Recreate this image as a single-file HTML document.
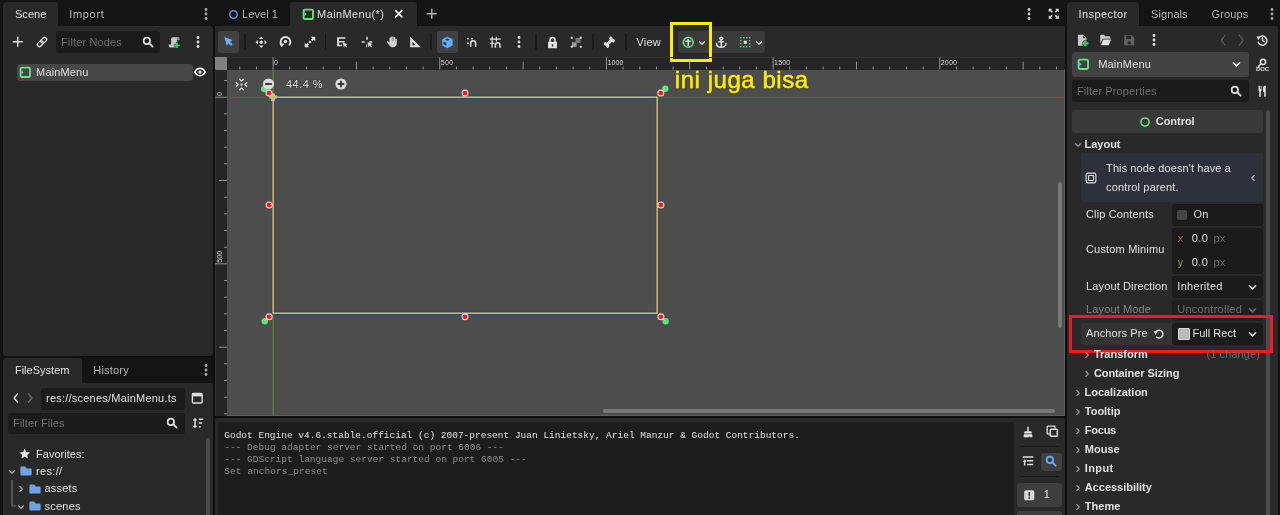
<!DOCTYPE html>
<html lang="en"><head><meta charset="utf-8"><title>Godot - MainMenu</title>
<style>
html,body{margin:0;padding:0}
body{width:1280px;height:515px;overflow:hidden;background:#141414;position:relative;font-family:"Liberation Sans",sans-serif;color:#e0e0e0}
.r{position:absolute}
.t{position:absolute;white-space:pre;line-height:1;font-family:"Liberation Sans",sans-serif}
#all{position:absolute;left:0;top:0;width:1280px;height:515px;will-change:transform;transform:translateZ(0)}
.m{font-family:"Liberation Mono",monospace}
svg{position:absolute;overflow:visible}
</style></head><body><div id="all">
<div class="r" style="left:3px;top:2px;width:55px;height:25px;background:#292929;border-radius:4px 4px 0 0"></div>
<div class="r" style="left:3px;top:26px;width:210px;height:330px;background:#292929;border-radius:0 3px 3px 3px"></div>
<div class="r" style="left:3px;top:358px;width:79px;height:25px;background:#292929;border-radius:4px 4px 0 0"></div>
<div class="r" style="left:3px;top:383px;width:210px;height:140px;background:#292929;border-radius:0 3px 0 0"></div>
<div class="r" style="left:290px;top:2px;width:127px;height:25px;background:#292929;border-radius:4px 4px 0 0"></div>
<div class="r" style="left:215px;top:26px;width:850px;height:31px;background:#292929;"></div>
<div class="r" style="left:215px;top:57px;width:850px;height:359px;background:#252525;"></div>
<div class="r" style="left:227px;top:69.5px;width:838px;height:346px;background:#4d4d4d;"></div>
<div class="r" style="left:215px;top:57px;width:12px;height:12.5px;background:#808080;"></div>
<div class="r" style="left:215px;top:418px;width:850px;height:100px;background:#292929;border-radius:3px 3px 0 0"></div>
<div class="r" style="left:218px;top:422px;width:796px;height:100px;background:#1d1d1d;border-radius:3px 3px 0 0"></div>
<div class="r" style="left:1067px;top:2px;width:72px;height:25px;background:#292929;border-radius:4px 4px 0 0"></div>
<div class="r" style="left:1067px;top:26px;width:210.5px;height:500px;background:#292929;border-radius:0 3px 0 0"></div>
<div class="r" style="left:56px;top:31px;width:104px;height:22px;background:#1b1b1b;border-radius:3px"></div>
<div class="r" style="left:16.5px;top:63.5px;width:176px;height:17.5px;background:#474747;border-radius:3px"></div>
<div class="r" style="left:40.5px;top:388px;width:144px;height:21.5px;background:#1b1b1b;border-radius:3px"></div>
<div class="r" style="left:7.5px;top:412.75px;width:177px;height:21.5px;background:#1b1b1b;border-radius:3px"></div>
<div class="r" style="left:206px;top:438px;width:4px;height:90px;background:#4a4a4a;border-radius:2px"></div>
<div class="r" style="left:218px;top:31px;width:21px;height:22px;background:#414141;border-radius:3px"></div>
<div class="r" style="left:437px;top:31px;width:21px;height:22px;background:#414141;border-radius:3px"></div>
<div class="r" style="left:677.5px;top:31px;width:87px;height:22px;background:#3b3b3b;border-radius:3px"></div>
<div class="r" style="left:244px;top:34px;width:1.5px;height:15.7px;background:#1b1b1b;"></div>
<div class="r" style="left:324.8px;top:34px;width:1.5px;height:15.7px;background:#1b1b1b;"></div>
<div class="r" style="left:430px;top:34px;width:1.5px;height:15.7px;background:#1b1b1b;"></div>
<div class="r" style="left:535.1px;top:34px;width:1.5px;height:15.7px;background:#1b1b1b;"></div>
<div class="r" style="left:592px;top:34px;width:1.5px;height:15.7px;background:#1b1b1b;"></div>
<div class="r" style="left:625.2px;top:34px;width:1.5px;height:15.7px;background:#1b1b1b;"></div>
<div class="r" style="left:1071.5px;top:52px;width:177px;height:25px;background:#424242;border-radius:3px"></div>
<div class="r" style="left:1071.5px;top:80px;width:177px;height:21.7px;background:#1b1b1b;border-radius:3px"></div>
<div class="r" style="left:1071.5px;top:110px;width:191px;height:23px;background:#393939;border-radius:3px"></div>
<div class="r" style="left:1265.6px;top:110px;width:4.3px;height:420px;background:#4a4a4a;border-radius:2px"></div>
<div class="r" style="left:1080.5px;top:153.3px;width:182px;height:49px;background:#2c313b;border-radius:3px"></div>
<div class="r" style="left:1171.7px;top:204px;width:91px;height:21.7px;background:#1b1b1b;border-radius:3px"></div>
<div class="r" style="left:1171.7px;top:227.6px;width:91px;height:46.7px;background:#1b1b1b;border-radius:3px"></div>
<div class="r" style="left:1171.7px;top:276.4px;width:91px;height:21.4px;background:#1b1b1b;border-radius:3px"></div>
<div class="r" style="left:1171.7px;top:299.6px;width:91px;height:21.4px;background:#1f1f1f;border-radius:3px"></div>
<div class="r" style="left:1080.5px;top:323px;width:182px;height:21.5px;background:#333333;border-radius:3px"></div>
<div class="r" style="left:1171.7px;top:323px;width:91px;height:21.5px;background:#1b1b1b;border-radius:3px"></div>
<div class="r" style="left:1177px;top:209.8px;width:10.2px;height:10.2px;background:#444444;border-radius:2px"></div>
<div class="r" style="left:1177.5px;top:328px;width:12px;height:11.6px;background:#b9b9b9;border:1px solid #d6d6d6;box-sizing:border-box;border-radius:1px"></div>
<div class="r" style="left:1020px;top:445.8px;width:39px;height:1.5px;background:#1b1b1b;"></div>
<div class="r" style="left:1020px;top:475.6px;width:39px;height:1.5px;background:#1b1b1b;"></div>
<div class="r" style="left:11.2px;top:480px;width:1.6px;height:26.8px;background:#525252;"></div>
<div class="r" style="left:11.2px;top:505.3px;width:5.2px;height:1.6px;background:#525252;"></div>
<div class="r" style="left:1041.25px;top:452.5px;width:20.5px;height:18px;background:#404040;border-radius:3px"></div>
<div class="r" style="left:1017px;top:482.5px;width:44.75px;height:24.5px;background:#3e3e3e;border-radius:3px"></div>
<div class="r" style="left:1017px;top:510.5px;width:44.75px;height:24.5px;background:#3e3e3e;border-radius:3px"></div>
<div class="r" style="left:603px;top:409px;width:452px;height:4px;background:#787878;border-radius:2px"></div>
<div class="r" style="left:1058px;top:181.5px;width:4px;height:146.5px;background:#787878;border-radius:2px"></div>
<div class="r" style="left:213px;top:26px;width:2px;height:500px;background:#0f0f0f;"></div>
<div class="r" style="left:1065px;top:26px;width:2px;height:500px;background:#0f0f0f;"></div>
<div class="r" style="left:215px;top:416px;width:850px;height:2px;background:#0f0f0f;"></div>
<div class="r" style="left:3px;top:356px;width:210px;height:2px;background:#101010;"></div>
<div class="r" style="left:670px;top:22px;width:42px;height:40px;background:transparent;border:3px solid #ffee00;box-sizing:border-box"></div>
<div class="r" style="left:1068.5px;top:315.3px;width:204.6px;height:37.5px;background:transparent;border:3.4px solid #ee1c1c;box-sizing:border-box"></div>
<svg style="left:0;top:0" width="1280" height="515" viewBox="0 0 1280 515">
<rect x="227" y="57" width="838" height="1" fill="#2f2f2f"/><rect x="215" y="69.500" width="1" height="346.500" fill="#333333"/>
<rect x="239.32" y="66.60" width="0.9" height="2.90" fill="#a0a0a0"/>
<rect x="255.98" y="66.60" width="0.9" height="2.90" fill="#a0a0a0"/>
<rect x="272.65" y="57.30" width="0.9" height="12.20" fill="#a0a0a0"/>
<rect x="289.32" y="66.60" width="0.9" height="2.90" fill="#a0a0a0"/>
<rect x="305.98" y="66.60" width="0.9" height="2.90" fill="#a0a0a0"/>
<rect x="322.65" y="66.60" width="0.9" height="2.90" fill="#a0a0a0"/>
<rect x="339.32" y="66.60" width="0.9" height="2.90" fill="#a0a0a0"/>
<rect x="355.98" y="61.60" width="0.9" height="7.90" fill="#a0a0a0"/>
<rect x="372.65" y="66.60" width="0.9" height="2.90" fill="#a0a0a0"/>
<rect x="389.32" y="66.60" width="0.9" height="2.90" fill="#a0a0a0"/>
<rect x="405.98" y="66.60" width="0.9" height="2.90" fill="#a0a0a0"/>
<rect x="422.65" y="66.60" width="0.9" height="2.90" fill="#a0a0a0"/>
<rect x="439.32" y="57.30" width="0.9" height="12.20" fill="#a0a0a0"/>
<rect x="455.98" y="66.60" width="0.9" height="2.90" fill="#a0a0a0"/>
<rect x="472.65" y="66.60" width="0.9" height="2.90" fill="#a0a0a0"/>
<rect x="489.32" y="66.60" width="0.9" height="2.90" fill="#a0a0a0"/>
<rect x="505.98" y="66.60" width="0.9" height="2.90" fill="#a0a0a0"/>
<rect x="522.65" y="61.60" width="0.9" height="7.90" fill="#a0a0a0"/>
<rect x="539.32" y="66.60" width="0.9" height="2.90" fill="#a0a0a0"/>
<rect x="555.98" y="66.60" width="0.9" height="2.90" fill="#a0a0a0"/>
<rect x="572.65" y="66.60" width="0.9" height="2.90" fill="#a0a0a0"/>
<rect x="589.32" y="66.60" width="0.9" height="2.90" fill="#a0a0a0"/>
<rect x="605.98" y="57.30" width="0.9" height="12.20" fill="#a0a0a0"/>
<rect x="622.65" y="66.60" width="0.9" height="2.90" fill="#a0a0a0"/>
<rect x="639.32" y="66.60" width="0.9" height="2.90" fill="#a0a0a0"/>
<rect x="655.98" y="66.60" width="0.9" height="2.90" fill="#a0a0a0"/>
<rect x="672.65" y="66.60" width="0.9" height="2.90" fill="#a0a0a0"/>
<rect x="689.32" y="61.60" width="0.9" height="7.90" fill="#a0a0a0"/>
<rect x="705.98" y="66.60" width="0.9" height="2.90" fill="#a0a0a0"/>
<rect x="722.65" y="66.60" width="0.9" height="2.90" fill="#a0a0a0"/>
<rect x="739.32" y="66.60" width="0.9" height="2.90" fill="#a0a0a0"/>
<rect x="755.98" y="66.60" width="0.9" height="2.90" fill="#a0a0a0"/>
<rect x="772.65" y="57.30" width="0.9" height="12.20" fill="#a0a0a0"/>
<rect x="789.32" y="66.60" width="0.9" height="2.90" fill="#a0a0a0"/>
<rect x="805.98" y="66.60" width="0.9" height="2.90" fill="#a0a0a0"/>
<rect x="822.65" y="66.60" width="0.9" height="2.90" fill="#a0a0a0"/>
<rect x="839.32" y="66.60" width="0.9" height="2.90" fill="#a0a0a0"/>
<rect x="855.98" y="61.60" width="0.9" height="7.90" fill="#a0a0a0"/>
<rect x="872.65" y="66.60" width="0.9" height="2.90" fill="#a0a0a0"/>
<rect x="889.32" y="66.60" width="0.9" height="2.90" fill="#a0a0a0"/>
<rect x="905.98" y="66.60" width="0.9" height="2.90" fill="#a0a0a0"/>
<rect x="922.65" y="66.60" width="0.9" height="2.90" fill="#a0a0a0"/>
<rect x="939.32" y="57.30" width="0.9" height="12.20" fill="#a0a0a0"/>
<rect x="955.98" y="66.60" width="0.9" height="2.90" fill="#a0a0a0"/>
<rect x="972.65" y="66.60" width="0.9" height="2.90" fill="#a0a0a0"/>
<rect x="989.32" y="66.60" width="0.9" height="2.90" fill="#a0a0a0"/>
<rect x="1005.98" y="66.60" width="0.9" height="2.90" fill="#a0a0a0"/>
<rect x="1022.65" y="61.60" width="0.9" height="7.90" fill="#a0a0a0"/>
<rect x="1039.32" y="66.60" width="0.9" height="2.90" fill="#a0a0a0"/>
<rect x="1055.98" y="66.60" width="0.9" height="2.90" fill="#a0a0a0"/>
<rect x="224.00" y="80.08" width="3.00" height="0.9" fill="#a0a0a0"/>
<rect x="215.20" y="96.75" width="11.80" height="0.9" fill="#a0a0a0"/>
<rect x="224.00" y="113.42" width="3.00" height="0.9" fill="#a0a0a0"/>
<rect x="224.00" y="130.08" width="3.00" height="0.9" fill="#a0a0a0"/>
<rect x="224.00" y="146.75" width="3.00" height="0.9" fill="#a0a0a0"/>
<rect x="224.00" y="163.42" width="3.00" height="0.9" fill="#a0a0a0"/>
<rect x="219.00" y="180.08" width="8.00" height="0.9" fill="#a0a0a0"/>
<rect x="224.00" y="196.75" width="3.00" height="0.9" fill="#a0a0a0"/>
<rect x="224.00" y="213.42" width="3.00" height="0.9" fill="#a0a0a0"/>
<rect x="224.00" y="230.08" width="3.00" height="0.9" fill="#a0a0a0"/>
<rect x="224.00" y="246.75" width="3.00" height="0.9" fill="#a0a0a0"/>
<rect x="215.20" y="263.42" width="11.80" height="0.9" fill="#a0a0a0"/>
<rect x="224.00" y="280.08" width="3.00" height="0.9" fill="#a0a0a0"/>
<rect x="224.00" y="296.75" width="3.00" height="0.9" fill="#a0a0a0"/>
<rect x="224.00" y="313.42" width="3.00" height="0.9" fill="#a0a0a0"/>
<rect x="224.00" y="330.08" width="3.00" height="0.9" fill="#a0a0a0"/>
<rect x="219.00" y="346.75" width="8.00" height="0.9" fill="#a0a0a0"/>
<rect x="224.00" y="363.42" width="3.00" height="0.9" fill="#a0a0a0"/>
<rect x="224.00" y="380.08" width="3.00" height="0.9" fill="#a0a0a0"/>
<rect x="224.00" y="396.75" width="3.00" height="0.9" fill="#a0a0a0"/>
<rect x="224.00" y="413.42" width="3.00" height="0.9" fill="#a0a0a0"/>
<text transform="translate(222.400 96.00) rotate(-90)" font-family="Liberation Sans, sans-serif" font-size="7.2" fill="#d0d0d0">0</text>
<text transform="translate(222.400 262.67) rotate(-90)" font-family="Liberation Sans, sans-serif" font-size="7.2" fill="#d0d0d0">500</text>
<rect x="1064" y="69.500" width="1" height="346.500" fill="#606060"/>
<rect x="227" y="415" width="838" height="1" fill="#606060"/>
<rect x="227" y="96.700" width="837" height="1" fill="#9c3f4e"/>
<rect x="272.600" y="69.500" width="1" height="346" fill="#6d8d2a"/>
<rect x="273.200" y="97.200" width="384" height="216" fill="none" stroke="#36426f" stroke-width="2.800"/>
<rect x="273.200" y="97.200" width="384" height="216" fill="none" stroke="#e9b94d" stroke-width="1.500"/>
<path d="M269.500 97h7.500M273 93.500v7.500" stroke="#e8dcd0" stroke-width="3.200"/><path d="M270 97h7M273 94v7" stroke="#f3a84a" stroke-width="1.500"/>
<circle cx="264.2" cy="89.0" r="3.2" fill="#62e27a"/>
<circle cx="665.3" cy="88.8" r="3.2" fill="#62e27a"/>
<circle cx="264.8" cy="321.2" r="3.2" fill="#62e27a"/>
<circle cx="665.6" cy="321.2" r="3.2" fill="#62e27a"/>
<circle cx="269.0" cy="93.1" r="3.5" fill="#f2e6e6"/><circle cx="269.0" cy="93.1" r="2.400" fill="#ff1414"/>
<circle cx="660.8" cy="93.1" r="3.5" fill="#f2e6e6"/><circle cx="660.8" cy="93.1" r="2.400" fill="#ff1414"/>
<circle cx="269.1" cy="316.8" r="3.5" fill="#f2e6e6"/><circle cx="269.1" cy="316.8" r="2.400" fill="#ff1414"/>
<circle cx="660.9" cy="316.8" r="3.5" fill="#f2e6e6"/><circle cx="660.9" cy="316.8" r="2.400" fill="#ff1414"/>
<circle cx="465.0" cy="93.1" r="3.5" fill="#f2e6e6"/><circle cx="465.0" cy="93.1" r="2.400" fill="#ff1414"/>
<circle cx="465.0" cy="316.8" r="3.5" fill="#f2e6e6"/><circle cx="465.0" cy="316.8" r="2.400" fill="#ff1414"/>
<circle cx="269.1" cy="205.0" r="3.5" fill="#f2e6e6"/><circle cx="269.1" cy="205.0" r="2.400" fill="#ff1414"/>
<circle cx="660.9" cy="205.0" r="3.5" fill="#f2e6e6"/><circle cx="660.9" cy="205.0" r="2.400" fill="#ff1414"/>
<circle cx="268.5" cy="84" r="5.6" fill="#dcdcdc"/><rect x="265.200" y="83" width="6.600" height="2" fill="#3a3a3a"/>
<circle cx="341" cy="84" r="5.6" fill="#dcdcdc"/><path d="M337.700 84h6.600M341 80.700v6.600" stroke="#3a3a3a" stroke-width="2"/>
<g transform="translate(235.5 78.500) scale(0.75)" fill="none" stroke="#e0e0e0" stroke-width="1.600" stroke-linecap="round" stroke-linejoin="round"><path d="M5.500 1 8 3.500 10.500 1M5.500 15 8 12.500 10.500 15M1 5.500 3.500 8 1 10.500M15 5.500 12.500 8 15 10.500"/><rect x="6.700" y="6.700" width="2.600" height="2.600" fill="#e0e0e0" stroke="none"/></g>
</svg>
<span class="t" id="t0" style="left:14.90px;top:9.00px;font-size:11px;color:#e0e0e0;letter-spacing:0.079px;">Scene</span>
<span class="t" id="t1" style="left:69.25px;top:9.00px;font-size:11px;color:#b5b5b5;letter-spacing:0.677px;">Import</span>
<span class="t" id="t2" style="left:61.00px;top:37.00px;font-size:11px;color:#6f6f6f;letter-spacing:0.125px;">Filter Nodes</span>
<span class="t" id="t3" style="left:36.10px;top:67.00px;font-size:11px;color:#e0e0e0;letter-spacing:0.143px;">MainMenu</span>
<span class="t" id="t4" style="left:242.10px;top:9.00px;font-size:11px;color:#b5b5b5;letter-spacing:0.059px;">Level 1</span>
<span class="t" id="t5" style="left:317.10px;top:9.00px;font-size:11px;color:#e0e0e0;letter-spacing:0.380px;">MainMenu(*)</span>
<span class="t" id="t6" style="left:636.50px;top:37.00px;font-size:11px;color:#e0e0e0;letter-spacing:0.148px;">View</span>
<span class="t" id="t7" style="left:286.00px;top:79.00px;font-size:11px;color:#e0e0e0;letter-spacing:0.458px;text-shadow:0 0 1px #222,0 0 1px #222">44.4 %</span>
<span class="t" id="t8" style="left:1078.50px;top:9.00px;font-size:11px;color:#e0e0e0;letter-spacing:0.439px;">Inspector</span>
<span class="t" id="t9" style="left:1151.10px;top:9.00px;font-size:11px;color:#b5b5b5;letter-spacing:0.075px;">Signals</span>
<span class="t" id="t10" style="left:1211.60px;top:9.00px;font-size:11px;color:#b5b5b5;letter-spacing:0.095px;">Groups</span>
<span class="t" id="t11" style="left:1098.20px;top:59.00px;font-size:11px;color:#e0e0e0;letter-spacing:0.193px;">MainMenu</span>
<span class="t" id="t12" style="left:1077.00px;top:86.00px;font-size:11px;color:#6f6f6f;letter-spacing:0.124px;">Filter Properties</span>
<span class="t" id="t13" style="left:1155.75px;top:116.00px;font-size:11px;color:#e0e0e0;font-weight:700;letter-spacing:-0.037px;">Control</span>
<span class="t" id="t14" style="left:1084.50px;top:139.00px;font-size:11px;color:#e0e0e0;font-weight:700;letter-spacing:-0.010px;">Layout</span>
<span class="t" id="t15" style="left:1106.10px;top:163.00px;font-size:11px;color:#e0e0e0;letter-spacing:0.088px;">This node doesn't have a</span>
<span class="t" id="t16" style="left:1106.10px;top:182.00px;font-size:11px;color:#e0e0e0;letter-spacing:0.151px;">control parent.</span>
<span class="t" id="t17" style="left:1086.00px;top:209.00px;font-size:11px;color:#e0e0e0;letter-spacing:0.143px;">Clip Contents</span>
<span class="t" id="t18" style="left:1193.60px;top:209.00px;font-size:11px;color:#e0e0e0;letter-spacing:0.056px;">On</span>
<span class="t" id="t19" style="left:1177.70px;top:233.00px;font-size:11px;color:#a4525c;letter-spacing:0.500px;">x</span>
<span class="t" id="t20" style="left:1191.75px;top:233.00px;font-size:11px;color:#e0e0e0;letter-spacing:0.451px;">0.0</span>
<span class="t" id="t21" style="left:1213.40px;top:233.00px;font-size:11px;color:#6a6a6a;letter-spacing:0.287px;">px</span>
<span class="t" id="t22" style="left:1177.70px;top:257.00px;font-size:11px;color:#8a9a3e;letter-spacing:0.500px;">y</span>
<span class="t" id="t23" style="left:1191.75px;top:257.00px;font-size:11px;color:#e0e0e0;letter-spacing:0.451px;">0.0</span>
<span class="t" id="t24" style="left:1213.40px;top:257.00px;font-size:11px;color:#6a6a6a;letter-spacing:0.287px;">px</span>
<span class="t" id="t25" style="left:1086.00px;top:244.00px;font-size:11px;color:#e0e0e0;letter-spacing:0.169px;">Custom Minimu</span>
<span class="t" id="t26" style="left:1086.00px;top:281.00px;font-size:11px;color:#e0e0e0;letter-spacing:0.131px;">Layout Direction</span>
<span class="t" id="t27" style="left:1177.30px;top:281.00px;font-size:11px;color:#e0e0e0;letter-spacing:0.293px;">Inherited</span>
<span class="t" id="t28" style="left:1086.00px;top:304.00px;font-size:11px;color:#808080;letter-spacing:0.136px;">Layout Mode</span>
<span class="t" id="t29" style="left:1177.30px;top:304.00px;font-size:11px;color:#707070;letter-spacing:0.253px;">Uncontrolled</span>
<span class="t" id="t30" style="left:1086.00px;top:328.00px;font-size:11px;color:#e0e0e0;letter-spacing:0.111px;">Anchors Pre</span>
<span class="t" id="t31" style="left:1192.40px;top:328.00px;font-size:11px;color:#e0e0e0;letter-spacing:0.022px;">Full Rect</span>
<span class="t" id="t32" style="left:1093.90px;top:349.00px;font-size:11px;color:#e0e0e0;font-weight:700;letter-spacing:0.011px;">Transform</span>
<span class="t" id="t33" style="left:1206.50px;top:349.00px;font-size:11px;color:#6c6c6c;letter-spacing:0.091px;">(1 change)</span>
<span class="t" id="t34" style="left:1093.90px;top:368.00px;font-size:11px;color:#e0e0e0;font-weight:700;letter-spacing:-0.086px;">Container Sizing</span>
<span class="t" id="t35" style="left:1084.50px;top:387.00px;font-size:11px;color:#e0e0e0;font-weight:700;letter-spacing:-0.022px;">Localization</span>
<span class="t" id="t36" style="left:1084.80px;top:406.00px;font-size:11px;color:#e0e0e0;font-weight:700;letter-spacing:-0.021px;">Tooltip</span>
<span class="t" id="t37" style="left:1084.80px;top:425.00px;font-size:11px;color:#e0e0e0;font-weight:700;letter-spacing:-0.241px;">Focus</span>
<span class="t" id="t38" style="left:1084.80px;top:444.00px;font-size:11px;color:#e0e0e0;font-weight:700;letter-spacing:0.021px;">Mouse</span>
<span class="t" id="t39" style="left:1084.80px;top:463.00px;font-size:11px;color:#e0e0e0;font-weight:700;letter-spacing:0.362px;">Input</span>
<span class="t" id="t40" style="left:1084.80px;top:482.00px;font-size:11px;color:#e0e0e0;font-weight:700;letter-spacing:-0.024px;">Accessibility</span>
<span class="t" id="t41" style="left:1084.80px;top:501.00px;font-size:11px;color:#e0e0e0;font-weight:700;letter-spacing:0.046px;">Theme</span>
<span class="t" id="t42" style="left:14.90px;top:365.00px;font-size:11px;color:#e0e0e0;letter-spacing:0.019px;">FileSystem</span>
<span class="t" id="t43" style="left:93.25px;top:365.00px;font-size:11px;color:#b5b5b5;letter-spacing:0.202px;">History</span>
<span class="t" id="t44" style="left:46.00px;top:393.00px;font-size:11px;color:#e0e0e0;letter-spacing:0.225px;">res://scenes/MainMenu.ts</span>
<span class="t" id="t45" style="left:13.00px;top:418.00px;font-size:11px;color:#6f6f6f;letter-spacing:0.072px;">Filter Files</span>
<span class="t" id="t46" style="left:36.10px;top:449.00px;font-size:11px;color:#e0e0e0;letter-spacing:0.010px;">Favorites:</span>
<span class="t" id="t47" style="left:36.10px;top:466.00px;font-size:11px;color:#e0e0e0;letter-spacing:0.308px;">res://</span>
<span class="t" id="t48" style="left:44.50px;top:483.00px;font-size:11px;color:#e0e0e0;letter-spacing:0.184px;">assets</span>
<span class="t" id="t49" style="left:44.50px;top:501.00px;font-size:11px;color:#e0e0e0;letter-spacing:0.232px;">scenes</span>
<span class="t" id="t50" style="left:1043.75px;top:489.00px;font-size:11px;color:#e0e0e0;letter-spacing:-0.125px;">1</span>
<span class="t" id="t51" style="left:674.80px;top:68.00px;font-size:24px;color:#ffee00;letter-spacing:0.542px;-webkit-text-stroke:0.45px #ffee00">ini juga bisa</span>
<span class="t" id="t52" style="left:274.10px;top:59.00px;font-size:7px;color:#d8d8d8;letter-spacing:1.294px;">0</span>
<span class="t" id="t53" style="left:440.80px;top:59.00px;font-size:7px;color:#d8d8d8;letter-spacing:0.271px;">500</span>
<span class="t" id="t54" style="left:607.40px;top:59.00px;font-size:7px;color:#d8d8d8;letter-spacing:0.180px;">1000</span>
<span class="t" id="t55" style="left:774.10px;top:59.00px;font-size:7px;color:#d8d8d8;letter-spacing:0.180px;">1500</span>
<span class="t" id="t56" style="left:940.80px;top:59.00px;font-size:7px;color:#d8d8d8;letter-spacing:0.180px;">2000</span>
<span class="t m" id="t57" style="left:224.25px;top:431.00px;font-size:9.48px;color:#e0e0e0;letter-spacing:0.017px;">Godot Engine v4.6.stable.official (c) 2007-present Juan Linietsky, Ariel Manzur &amp; Godot Contributors.</span>
<span class="t m" id="t58" style="left:224.25px;top:443.00px;font-size:9.48px;color:#8c8c8c;letter-spacing:0.027px;">--- Debug adapter server started on port 6006 ---</span>
<span class="t m" id="t59" style="left:224.25px;top:455.00px;font-size:9.48px;color:#8c8c8c;letter-spacing:0.026px;">--- GDScript language server started on port 6005 ---</span>
<span class="t m" id="t60" style="left:224.25px;top:467.00px;font-size:9.48px;color:#8c8c8c;letter-spacing:0.062px;">Set anchors_preset</span>
<svg style="left:12.15px;top:36.15px" width="11.5" height="11.5" viewBox="0 0 16 16" ><path d="M7 1h2v6h6v2H9v6H7V9H1V7h6z" fill="#e0e0e0" /></svg>
<svg style="left:36.10px;top:35.80px" width="12" height="12" viewBox="0 0 16 16" ><g transform="rotate(-45 8 8)" fill="none" stroke="#e0e0e0" stroke-width="1.700"><rect x="0.400" y="5.300" width="8.800" height="5.400" rx="2.700"/><rect x="6.800" y="5.300" width="8.800" height="5.400" rx="2.700"/></g></svg>
<svg style="left:142.00px;top:35.80px" width="12" height="12" viewBox="0 0 16 16" ><circle cx="6.5" cy="6.5" r="4.3" fill="none" stroke="#e0e0e0" stroke-width="2.2"/><path d="M9.6 9.6 14.2 14.2" stroke="#e0e0e0" stroke-width="2.4" stroke-linecap="round"/></svg>
<svg style="left:168.05px;top:35.75px" width="12.5" height="12.5" viewBox="0 0 16 16" ><path d="M6 1.500h6.500a2 2 0 0 1 2 2V5h-3.200v7.300a2.400 2.400 0 0 1-2.400 2.400H3a2 2 0 0 1-2-2V11h3V3.500a2 2 0 0 1 2-2z" fill="#c8c8c8" /><path d="M12.500 1.500a2 2 0 0 1 2 2V5h-3.200V3a1.500 1.500 0 0 1 1.200-1.500z" fill="#8c8c8c" /><path d="M10.400 8.500h2.200v2.400H15v2.200h-2.400v2.400h-2.200v-2.400H8v-2.200h2.400z" fill="#35d063" stroke="#292929" stroke-width="0.900" paint-order="stroke" stroke-linejoin="round"/></svg>
<svg style="left:191.75px;top:35.90px" width="12" height="12" viewBox="0 0 16 16" ><circle cx="8" cy="2" r="1.9" fill="#e0e0e0"/><circle cx="8" cy="8" r="1.9" fill="#e0e0e0"/><circle cx="8" cy="14" r="1.9" fill="#e0e0e0"/></svg>
<svg style="left:19.10px;top:65.70px" width="12.6" height="12.6" viewBox="0 0 16 16" ><rect x="2" y="2" width="12" height="12" rx="1.700" fill="none" stroke="#62e680" stroke-width="2.300"/><path d="M3 5.400 5.800 8 3 10.600z" fill="#62e680"/></svg>
<svg style="left:194.30px;top:65.90px" width="12" height="12" viewBox="0 0 16 16" ><path d="M1.200 8C2.600 4.800 5 3.200 8 3.200s5.400 1.600 6.800 4.800C13.400 11.200 11 12.800 8 12.800S2.600 11.200 1.200 8z" fill="none" stroke="#ffffff" stroke-width="2.300" stroke-linejoin="round"/><circle cx="8" cy="8" r="2" fill="#fff"/></svg>
<svg style="left:200.00px;top:364.00px" width="12" height="12" viewBox="0 0 16 16" ><circle cx="8" cy="2" r="1.9" fill="#a8a8a8"/><circle cx="8" cy="8" r="1.9" fill="#a8a8a8"/><circle cx="8" cy="14" r="1.9" fill="#a8a8a8"/></svg>
<svg style="left:9.50px;top:392.40px" width="12" height="12" viewBox="0 0 16 16" ><path d="M10 2.5 5.5 8 10 13.5" fill="none" stroke="#e0e0e0" stroke-width="2" stroke-linecap="round" stroke-linejoin="round"/></svg>
<svg style="left:23.70px;top:392.40px" width="12" height="12" viewBox="0 0 16 16" ><path d="M6 2.5 10.5 8 6 13.5" fill="none" stroke="#6a6a6a" stroke-width="2" stroke-linecap="round" stroke-linejoin="round"/></svg>
<svg style="left:191.35px;top:392.05px" width="12.5" height="12.5" viewBox="0 0 16 16" ><rect x="1.8" y="2" width="12.4" height="12" rx="1.2" fill="none" stroke="#e0e0e0" stroke-width="1.8"/><rect x="1.8" y="2" width="12.400" height="3.600" fill="#e0e0e0"/></svg>
<svg style="left:165.80px;top:417.20px" width="12" height="12" viewBox="0 0 16 16" ><circle cx="6.5" cy="6.5" r="4.3" fill="none" stroke="#e0e0e0" stroke-width="2.2"/><path d="M9.6 9.6 14.2 14.2" stroke="#e0e0e0" stroke-width="2.4" stroke-linecap="round"/></svg>
<svg style="left:191.80px;top:417.40px" width="12" height="12" viewBox="0 0 16 16" ><path d="M4 1 1 4.500h2v7H1L4 15l3-3.500H5v-7h2zM9 2h6v2H9zm0 5h4.500v2H9zm0 5h2.500v2H9z" fill="#e0e0e0" /></svg>
<svg style="left:19.45px;top:447.85px" width="11.5" height="11.5" viewBox="0 0 16 16" ><path d="M8 .8l2.200 4.700 5.100.600-3.800 3.500 1 5.100L8 12.200l-4.500 2.500 1-5.100L.700 6.100l5.100-.600z" fill="#e6e6e6" /></svg>
<svg style="left:19.50px;top:465.30px" width="12" height="12" viewBox="0 0 16 16" ><path d="M2 2a1.500 1.500 0 0 0-1.500 1.500v9A1.500 1.500 0 0 0 2 14h12a1.500 1.500 0 0 0 1.500-1.500V6A1.500 1.500 0 0 0 14 4.500H9L7.500 2.600A1.500 1.500 0 0 0 6.300 2z" fill="#6ea4e6" /></svg>
<svg style="left:28.50px;top:482.80px" width="12" height="12" viewBox="0 0 16 16" ><path d="M2 2a1.500 1.500 0 0 0-1.500 1.500v9A1.500 1.500 0 0 0 2 14h12a1.500 1.500 0 0 0 1.500-1.500V6A1.500 1.500 0 0 0 14 4.500H9L7.500 2.600A1.500 1.500 0 0 0 6.300 2z" fill="#6ea4e6" /></svg>
<svg style="left:28.50px;top:500.30px" width="12" height="12" viewBox="0 0 16 16" ><path d="M2 2a1.500 1.500 0 0 0-1.500 1.500v9A1.500 1.500 0 0 0 2 14h12a1.500 1.500 0 0 0 1.500-1.500V6A1.500 1.500 0 0 0 14 4.500H9L7.500 2.600A1.500 1.500 0 0 0 6.300 2z" fill="#6ea4e6" /></svg>
<svg style="left:6.80px;top:466.80px" width="10" height="10" viewBox="0 0 16 16" ><path d="M4 6l4 4 4-4" fill="none" stroke="#b0b0b0" stroke-width="1.8" stroke-linecap="round" stroke-linejoin="round"/></svg>
<svg style="left:16.30px;top:483.80px" width="10" height="10" viewBox="0 0 16 16" ><path d="M6 4l4 4-4 4" fill="none" stroke="#b0b0b0" stroke-width="1.8" stroke-linecap="round" stroke-linejoin="round"/></svg>
<svg style="left:15.80px;top:501.50px" width="10" height="10" viewBox="0 0 16 16" ><path d="M4 6l4 4 4-4" fill="none" stroke="#b0b0b0" stroke-width="1.8" stroke-linecap="round" stroke-linejoin="round"/></svg>
<svg style="left:1023.40px;top:8.00px" width="12" height="12" viewBox="0 0 16 16" ><circle cx="8" cy="2" r="1.9" fill="#c8c8c8"/><circle cx="8" cy="8" r="1.9" fill="#c8c8c8"/><circle cx="8" cy="14" r="1.9" fill="#c8c8c8"/></svg>
<svg style="left:227.70px;top:8.50px" width="11" height="11" viewBox="0 0 16 16" ><circle cx="8" cy="8" r="5.400" fill="none" stroke="#5b8fe6" stroke-width="2.200"/></svg>
<svg style="left:301.70px;top:7.70px" width="12.6" height="12.6" viewBox="0 0 16 16" ><rect x="2" y="2" width="12" height="12" rx="1.700" fill="none" stroke="#62e680" stroke-width="2.300"/><path d="M3 5.400 5.800 8 3 10.600z" fill="#62e680"/></svg>
<svg style="left:393.15px;top:8.25px" width="11.5" height="11.5" viewBox="0 0 16 16" ><path d="M3 3l10 10M13 3 3 13" fill="none" stroke="#ffffff" stroke-width="2.2" /></svg>
<svg style="left:426.05px;top:8.25px" width="11.5" height="11.5" viewBox="0 0 16 16" ><path d="M7 1h2v6h6v2H9v6H7V9H1V7h6z" fill="#b0b0b0" /></svg>
<svg style="left:200.00px;top:8.00px" width="12" height="12" viewBox="0 0 16 16" ><circle cx="8" cy="2" r="1.9" fill="#a8a8a8"/><circle cx="8" cy="8" r="1.9" fill="#a8a8a8"/><circle cx="8" cy="14" r="1.9" fill="#a8a8a8"/></svg>
<svg style="left:1265.50px;top:8.00px" width="12" height="12" viewBox="0 0 16 16" ><circle cx="8" cy="2" r="1.9" fill="#a8a8a8"/><circle cx="8" cy="8" r="1.9" fill="#a8a8a8"/><circle cx="8" cy="14" r="1.9" fill="#a8a8a8"/></svg>
<svg style="left:1048.05px;top:8.25px" width="11.5" height="11.5" viewBox="0 0 16 16" ><path d="M1 1h5L4.300 2.700 6.700 5.100 5.100 6.700 2.700 4.300 1 6zM15 1v5l-1.700-1.700-2.400 2.400-1.600-1.600 2.400-2.400L10 1zM1 15v-5l1.700 1.700 2.400-2.400 1.600 1.600-2.400 2.400L6 15zM15 15h-5l1.700-1.700-2.400-2.400 1.600-1.600 2.400 2.400L15 10z" fill="#e0e0e0" /></svg>
<svg style="left:222.80px;top:36.40px" width="10.8" height="10.8" viewBox="0 0 16 16" ><path d="M2 1.500 5.500 14.500 8.300 11.200 11.800 14.800 14.200 12.400 10.700 8.800 14.200 6z" fill="#5fb0ff" /></svg>
<svg style="left:255.15px;top:35.75px" width="12.5" height="12.5" viewBox="0 0 16 16" ><path d="M8 .800 5.200 3.800h5.600zM8 15.200l2.800-3H5.200zM.800 8l3 2.800V5.200zM15.200 8l-3-2.800v5.600z" fill="#e0e0e0" /><circle cx="8" cy="8" r="2.100" fill="#e0e0e0"/></svg>
<svg style="left:278.90px;top:35.30px" width="13" height="13" viewBox="0 0 16 16" ><path d="M3.800 12.800A6 6 0 1 1 12.200 12.800" fill="none" stroke="#e0e0e0" stroke-width="2.3" /><path d="M.600 10.200 6.600 10.800 3 15.400z" fill="#e0e0e0" /><circle cx="8" cy="8" r="2.100" fill="#e0e0e0"/></svg>
<svg style="left:303.60px;top:36.00px" width="12" height="12" viewBox="0 0 16 16" ><path d="M9 1h6v6l-2-2-1.800 1.800-2-2L11 3zM7 15H1V9l2 2 1.800-1.800 2 2L5 13z" fill="#e0e0e0" /><circle cx="8" cy="8" r="1.800" fill="#e0e0e0"/></svg>
<svg style="left:335.90px;top:36.00px" width="12" height="12" viewBox="0 0 16 16" ><path d="M1.500 1.500h11v2.200h-8.600v2.800h7.600v2.200H3.900v2.800h4v2.200H1.500z" fill="#e0e0e0" /><path d="M9 8.500l6.500 2.400-2.600 1 2 2.200-1.200 1.100-2-2.200-1.200 2.400z" fill="#e0e0e0" /></svg>
<svg style="left:360.90px;top:36.00px" width="12" height="12" viewBox="0 0 16 16" ><path d="M7 1h2v4H7zM1 7h4v2H1zM11 7h4v2h-4zM7 11h1.200v4H7z" fill="#e0e0e0" /><path d="M8.500 8 15.500 10.600l-2.800 1 2.200 2.400-1.300 1.200-2.200-2.400-1.200 2.600z" fill="#e0e0e0" /></svg>
<svg style="left:385.55px;top:36.45px" width="11.5" height="11.5" viewBox="0 0 16 16" ><path d="M6.500 1.300a1 1 0 0 1 1.800 0V7h.400V.900a1 1 0 0 1 1.900 0V7h.400V1.800a1 1 0 0 1 1.900 0V8.500h.300V4.500a.900.900 0 0 1 1.800 0V10.500c0 3-1.800 5-4.500 5H9c-2 0-3.300-1-4.500-2.800L1.200 8.500c-.500-.900.600-1.900 1.600-1.100L4.800 9V2.800a.900.900 0 0 1 1.700 0z" fill="#d0d0d0" /></svg>
<svg style="left:408.95px;top:35.55px" width="12.5" height="12.5" viewBox="0 0 16 16" ><path d="M1.500 1 15 14.500H1.500zM4.300 7.600V11.700H8.400z" fill="#dcdcdc" fill-rule="evenodd"/></svg>
<svg style="left:441.20px;top:35.60px" width="12.8" height="12.8" viewBox="0 0 16 16" ><path d="M8 .800 14.500 4.200v7.600L8 15.200 1.500 11.800V4.200z" fill="#5fb0ff" /><path d="M8 3.200 10.800 4.600 8 6 5.200 4.600zM3.200 6.800 6.600 8.600v3.600L3.200 10.400z" fill="#2a2a2a" /></svg>
<svg style="left:466.30px;top:36.30px" width="12" height="12" viewBox="0 0 16 16" ><path d="M6.200 14.500V9.700a3.300 3.300 0 0 1 6.600 0v4.800" fill="none" stroke="#e0e0e0" stroke-width="2" /><circle cx="2.500" cy="3.500" r="1.300" fill="#e0e0e0"/><circle cx="2.500" cy="9.500" r="1.300" fill="#e0e0e0"/><circle cx="8" cy="3.500" r="1.300" fill="#e0e0e0"/></svg>
<svg style="left:489.25px;top:35.75px" width="12.5" height="12.5" viewBox="0 0 16 16" ><path d="M4 1v14M9.500 1v6M1 4h14M1 9.500h6" fill="none" stroke="#e0e0e0" stroke-width="1.6" /><path d="M8.200 15V11.500a2.900 2.900 0 0 1 5.800 0V15" fill="none" stroke="#e0e0e0" stroke-width="2" /></svg>
<svg style="left:513.40px;top:36.00px" width="12" height="12" viewBox="0 0 16 16" ><circle cx="8" cy="2" r="1.9" fill="#e0e0e0"/><circle cx="8" cy="8" r="1.9" fill="#e0e0e0"/><circle cx="8" cy="14" r="1.9" fill="#e0e0e0"/></svg>
<svg style="left:546.00px;top:35.50px" width="13" height="13" viewBox="0 0 16 16" ><path d="M8 1a4 4 0 0 0-4 4v2H2.500v8h11V7H12V5a4 4 0 0 0-4-4zm0 2a2 2 0 0 1 2 2v2H6V5a2 2 0 0 1 2-2zm-.800 7h1.600v3H7.200z" fill="#e0e0e0" fill-rule="evenodd"/></svg>
<svg style="left:570.45px;top:35.75px" width="12.5" height="12.5" viewBox="0 0 16 16" ><rect x="2.500" y="8" width="6" height="6" fill="#9a9a9a"/><rect x="7" y="2.500" width="6.500" height="6.500" fill="#777"/><path d="M1 1h2.500v2.500H1zM12.500 1H15v2.500h-2.500zM1 12.500h2.500V15H1zM12.500 12.500H15V15h-2.500z" fill="#e0e0e0" /></svg>
<svg style="left:603.35px;top:35.75px" width="12.5" height="12.5" viewBox="0 0 16 16" ><g transform="rotate(-45 8 8)"><path d="M3.500 6h9v4h-9z" fill="#e0e0e0" /><circle cx="3" cy="6" r="2.200" fill="#e0e0e0"/><circle cx="3" cy="10" r="2.200" fill="#e0e0e0"/><circle cx="13" cy="6" r="2.200" fill="#e0e0e0"/><circle cx="13" cy="10" r="2.200" fill="#e0e0e0"/></g></svg>
<svg style="left:681.75px;top:35.75px" width="12.5" height="12.5" viewBox="0 0 16 16" ><circle cx="8" cy="8" r="6.300" fill="none" stroke="#62e680" stroke-width="2.100"/><path d="M7 3.500h2v2.200h2.800v2H9v4.800H7V7.700H4.200v-2H7z" fill="#e0e0e0" /></svg>
<svg style="left:697.30px;top:38.20px" width="10" height="10" viewBox="0 0 16 16" ><path d="M4 6l4 4 4-4" fill="none" stroke="#e0e0e0" stroke-width="1.8" stroke-linecap="round" stroke-linejoin="round"/></svg>
<svg style="left:714.75px;top:35.75px" width="12.5" height="12.5" viewBox="0 0 16 16" ><circle cx="8" cy="3.200" r="1.900" fill="none" stroke="#e0e0e0" stroke-width="1.600"/><path d="M8 5v9.500M5 7.500h6M2 9.500c0 3 2.500 5 6 5s6-2 6-5" fill="none" stroke="#e0e0e0" stroke-width="1.9" stroke-linecap="round"/></svg>
<svg style="left:738.75px;top:35.75px" width="12.5" height="12.5" viewBox="0 0 16 16" ><rect x="2.300" y="2.300" width="11.400" height="11.400" fill="none" stroke="#62e680" stroke-width="2" stroke-linecap="round" stroke-dasharray="0.010 3.790"/><rect x="6" y="6" width="4" height="4" fill="#e0e0e0"/></svg>
<svg style="left:754.30px;top:38.20px" width="10" height="10" viewBox="0 0 16 16" ><path d="M4 6l4 4 4-4" fill="none" stroke="#e0e0e0" stroke-width="1.8" stroke-linecap="round" stroke-linejoin="round"/></svg>
<svg style="left:1075.95px;top:33.75px" width="12.5" height="12.5" viewBox="0 0 16 16" ><path d="M2.500 1v14h6.200a4.600 4.600 0 0 1 2.800-7.300L13.500 7.500V5.500L9 1zM9 2.200 12.300 5.500H9z" fill="#c8c8c8" fill-rule="evenodd"/><path d="M10.900 8.500h2.200v2.400h2.400v2.200h-2.400v2.400h-2.200v-2.400H8.500v-2.200h2.400z" fill="#35d063" stroke="#35d063" stroke-width="0.800" stroke-linejoin="round"/></svg>
<svg style="left:1099.35px;top:33.75px" width="12.5" height="12.5" viewBox="0 0 16 16" ><path d="M1.500 2.500A1.500 1.500 0 0 1 3 1h3.500l1.500 2h5A1.500 1.500 0 0 1 14.500 4.500V6H4.800L1.500 12z" fill="#c8c8c8" /><path d="M5.500 7h10L12.500 14.500h-10z" fill="#e0e0e0" /></svg>
<svg style="left:1123.15px;top:33.75px" width="12.5" height="12.5" viewBox="0 0 16 16" ><path d="M2 1.500h9.500L14.500 4.500v10h-13v-12.500zM4 2.500v4h6.500v-4zM8 9a2.200 2.200 0 1 0 0 4.400A2.200 2.200 0 0 0 8 9z" fill="#626262" fill-rule="evenodd"/></svg>
<svg style="left:1147.60px;top:34.00px" width="12" height="12" viewBox="0 0 16 16" ><circle cx="8" cy="2" r="1.9" fill="#e0e0e0"/><circle cx="8" cy="8" r="1.9" fill="#e0e0e0"/><circle cx="8" cy="14" r="1.9" fill="#e0e0e0"/></svg>
<svg style="left:1217.05px;top:33.75px" width="12.5" height="12.5" viewBox="0 0 16 16" ><path d="M10.500 1.500 5.500 8l5 6.500" fill="none" stroke="#5c5c5c" stroke-width="1.6" stroke-linecap="round"/></svg>
<svg style="left:1234.95px;top:33.75px" width="12.5" height="12.5" viewBox="0 0 16 16" ><path d="M5.500 1.500 10.500 8l-5 6.500" fill="none" stroke="#5c5c5c" stroke-width="1.6" stroke-linecap="round"/></svg>
<svg style="left:1256.35px;top:33.95px" width="12.5" height="12.5" viewBox="0 0 16 16" ><path d="M3.200 5.500A5.800 5.800 0 1 1 2.600 10" fill="none" stroke="#e0e0e0" stroke-width="1.9" /><path d="M.500 3 5.800 3.500 3 8z" fill="#e0e0e0" /><path d="M8.300 4.800V8.300l2.400 1.500" fill="none" stroke="#e0e0e0" stroke-width="1.7" stroke-linecap="round"/></svg>
<svg style="left:1077.30px;top:57.90px" width="12.6" height="12.6" viewBox="0 0 16 16" ><rect x="2" y="2" width="12" height="12" rx="1.700" fill="none" stroke="#62e680" stroke-width="2.300"/><path d="M3 5.400 5.800 8 3 10.600z" fill="#62e680"/></svg>
<svg style="left:1230.70px;top:59.10px" width="11" height="11" viewBox="0 0 16 16" ><path d="M3.500 5.500 8 10l4.500-4.500" fill="none" stroke="#ffffff" stroke-width="2.2" stroke-linecap="round" stroke-linejoin="round"/></svg>
<svg style="left:1256.15px;top:57.75px" width="12.5" height="12.5" viewBox="0 0 16 16" ><circle cx="9" cy="5" r="3.300" fill="none" stroke="#e0e0e0" stroke-width="1.900"/><path d="M6.600 7.400 3 11" fill="none" stroke="#e0e0e0" stroke-width="2" stroke-linecap="round"/></svg>
<span class="t" style="left:1256px;top:66px;font-size:6px;font-weight:700;color:#e0e0e0;letter-spacing:-0.15px">DOC</span>
<svg style="left:1230.30px;top:85.00px" width="12" height="12" viewBox="0 0 16 16" ><circle cx="6.5" cy="6.5" r="4.3" fill="none" stroke="#e0e0e0" stroke-width="2.2"/><path d="M9.6 9.6 14.2 14.2" stroke="#e0e0e0" stroke-width="2.4" stroke-linecap="round"/></svg>
<svg style="left:1256.25px;top:84.75px" width="12.5" height="12.5" viewBox="0 0 16 16" ><path d="M3.200 1v5.500a2 2 0 0 0 1 1.700V15h2V8.200a2 2 0 0 0 1-1.700V1h-1.200v4H5V1zM11.500 1A2.500 2.500 0 0 0 9 3.500V9h1.500v6h2V1z" fill="#e0e0e0" /></svg>
<svg style="left:1139.40px;top:115.60px" width="12" height="12" viewBox="0 0 16 16" ><circle cx="8" cy="8" r="5.400" fill="none" stroke="#62e680" stroke-width="2.200"/></svg>
<svg style="left:1072.50px;top:139.70px" width="10" height="10" viewBox="0 0 16 16" ><path d="M4 6l4 4 4-4" fill="none" stroke="#9a9a9a" stroke-width="1.8" stroke-linecap="round" stroke-linejoin="round"/></svg>
<svg style="left:1081.60px;top:349.60px" width="10" height="10" viewBox="0 0 16 16" ><path d="M6 4l4 4-4 4" fill="none" stroke="#9a9a9a" stroke-width="1.8" stroke-linecap="round" stroke-linejoin="round"/></svg>
<svg style="left:1081.60px;top:368.50px" width="10" height="10" viewBox="0 0 16 16" ><path d="M6 4l4 4-4 4" fill="none" stroke="#9a9a9a" stroke-width="1.8" stroke-linecap="round" stroke-linejoin="round"/></svg>
<svg style="left:1072.60px;top:387.50px" width="10" height="10" viewBox="0 0 16 16" ><path d="M6 4l4 4-4 4" fill="none" stroke="#9a9a9a" stroke-width="1.8" stroke-linecap="round" stroke-linejoin="round"/></svg>
<svg style="left:1072.60px;top:406.50px" width="10" height="10" viewBox="0 0 16 16" ><path d="M6 4l4 4-4 4" fill="none" stroke="#9a9a9a" stroke-width="1.8" stroke-linecap="round" stroke-linejoin="round"/></svg>
<svg style="left:1072.60px;top:425.50px" width="10" height="10" viewBox="0 0 16 16" ><path d="M6 4l4 4-4 4" fill="none" stroke="#9a9a9a" stroke-width="1.8" stroke-linecap="round" stroke-linejoin="round"/></svg>
<svg style="left:1072.60px;top:444.50px" width="10" height="10" viewBox="0 0 16 16" ><path d="M6 4l4 4-4 4" fill="none" stroke="#9a9a9a" stroke-width="1.8" stroke-linecap="round" stroke-linejoin="round"/></svg>
<svg style="left:1072.60px;top:463.50px" width="10" height="10" viewBox="0 0 16 16" ><path d="M6 4l4 4-4 4" fill="none" stroke="#9a9a9a" stroke-width="1.8" stroke-linecap="round" stroke-linejoin="round"/></svg>
<svg style="left:1072.60px;top:482.50px" width="10" height="10" viewBox="0 0 16 16" ><path d="M6 4l4 4-4 4" fill="none" stroke="#9a9a9a" stroke-width="1.8" stroke-linecap="round" stroke-linejoin="round"/></svg>
<svg style="left:1072.60px;top:501.50px" width="10" height="10" viewBox="0 0 16 16" ><path d="M6 4l4 4-4 4" fill="none" stroke="#9a9a9a" stroke-width="1.8" stroke-linecap="round" stroke-linejoin="round"/></svg>
<svg style="left:1085.00px;top:171.90px" width="12" height="12" viewBox="0 0 16 16" ><rect x="1.500" y="1.500" width="13" height="13" rx="2.500" fill="none" stroke="#e0e0e0" stroke-width="1.500"/><rect x="4.700" y="4.700" width="6.600" height="6.600" rx="1" fill="none" stroke="#e0e0e0" stroke-width="1.500"/></svg>
<svg style="left:1248.20px;top:173.00px" width="10" height="10" viewBox="0 0 16 16" ><path d="M10 4 6 8l4 4" fill="none" stroke="#c0c0c0" stroke-width="1.8" stroke-linecap="round" stroke-linejoin="round"/></svg>
<svg style="left:1246.50px;top:281.80px" width="11" height="11" viewBox="0 0 16 16" ><path d="M3.500 5.500 8 10l4.500-4.500" fill="none" stroke="#e0e0e0" stroke-width="2.2" stroke-linecap="round" stroke-linejoin="round"/></svg>
<svg style="left:1246.50px;top:305.10px" width="11" height="11" viewBox="0 0 16 16" ><path d="M3.500 5.500 8 10l4.500-4.500" fill="none" stroke="#707070" stroke-width="2.2" stroke-linecap="round" stroke-linejoin="round"/></svg>
<svg style="left:1246.50px;top:328.50px" width="11" height="11" viewBox="0 0 16 16" ><path d="M3.500 5.500 8 10l4.500-4.500" fill="none" stroke="#e0e0e0" stroke-width="2.2" stroke-linecap="round" stroke-linejoin="round"/></svg>
<svg style="left:1153.10px;top:328.00px" width="12" height="12" viewBox="0 0 16 16" ><path d="M4.300 11.800A5.200 5.200 0 1 0 3.200 6.200" fill="none" stroke="#e0e0e0" stroke-width="1.9" /><path d="M.800 4.200 6.300 4.600 3.500 9z" fill="#e0e0e0" /></svg>
<svg style="left:1021.50px;top:425.60px" width="12" height="12" viewBox="0 0 16 16" ><path d="M7 1h2v6h2.500a1.500 1.500 0 0 1 1.500 1.500V10H3V8.500A1.500 1.500 0 0 1 4.500 7H7zM2.500 11h11l.5 4h-3l-.5-2-.5 2H2z" fill="#e0e0e0" /></svg>
<svg style="left:1045.55px;top:425.35px" width="12.5" height="12.5" viewBox="0 0 16 16" ><path d="M4.500 11.500h-2a1 1 0 0 1-1-1v-8a1 1 0 0 1 1-1h8a1 1 0 0 1 1 1v2" fill="none" stroke="#e0e0e0" stroke-width="1.7" /><rect x="5.500" y="5.500" width="9" height="9" rx="1" fill="none" stroke="#e0e0e0" stroke-width="1.900"/></svg>
<svg style="left:1021.50px;top:455.40px" width="12" height="12" viewBox="0 0 16 16" ><path d="M1 1.500h14v2H1zM7 6.500h8v2H7zM7 11.500h8v2H7zM3.500 5.500 6 9H4.500v5h-2V9H1z" fill="#e0e0e0" /></svg>
<svg style="left:1045.30px;top:455.30px" width="12" height="12" viewBox="0 0 16 16" ><circle cx="6.5" cy="6.5" r="4.3" fill="none" stroke="#5fb0ff" stroke-width="2.2"/><path d="M9.6 9.6 14.2 14.2" stroke="#5fb0ff" stroke-width="2.4" stroke-linecap="round"/></svg>
<svg style="left:1022.75px;top:488.55px" width="12.5" height="12.5" viewBox="0 0 16 16" ><rect x="1.500" y="1.500" width="13" height="13" rx="2.500" fill="#d8d8d8"/><rect x="7" y="4" width="2" height="5.500" fill="#383838"/><rect x="7" y="10.600" width="2" height="2" fill="#383838"/></svg>
</div></body></html>
